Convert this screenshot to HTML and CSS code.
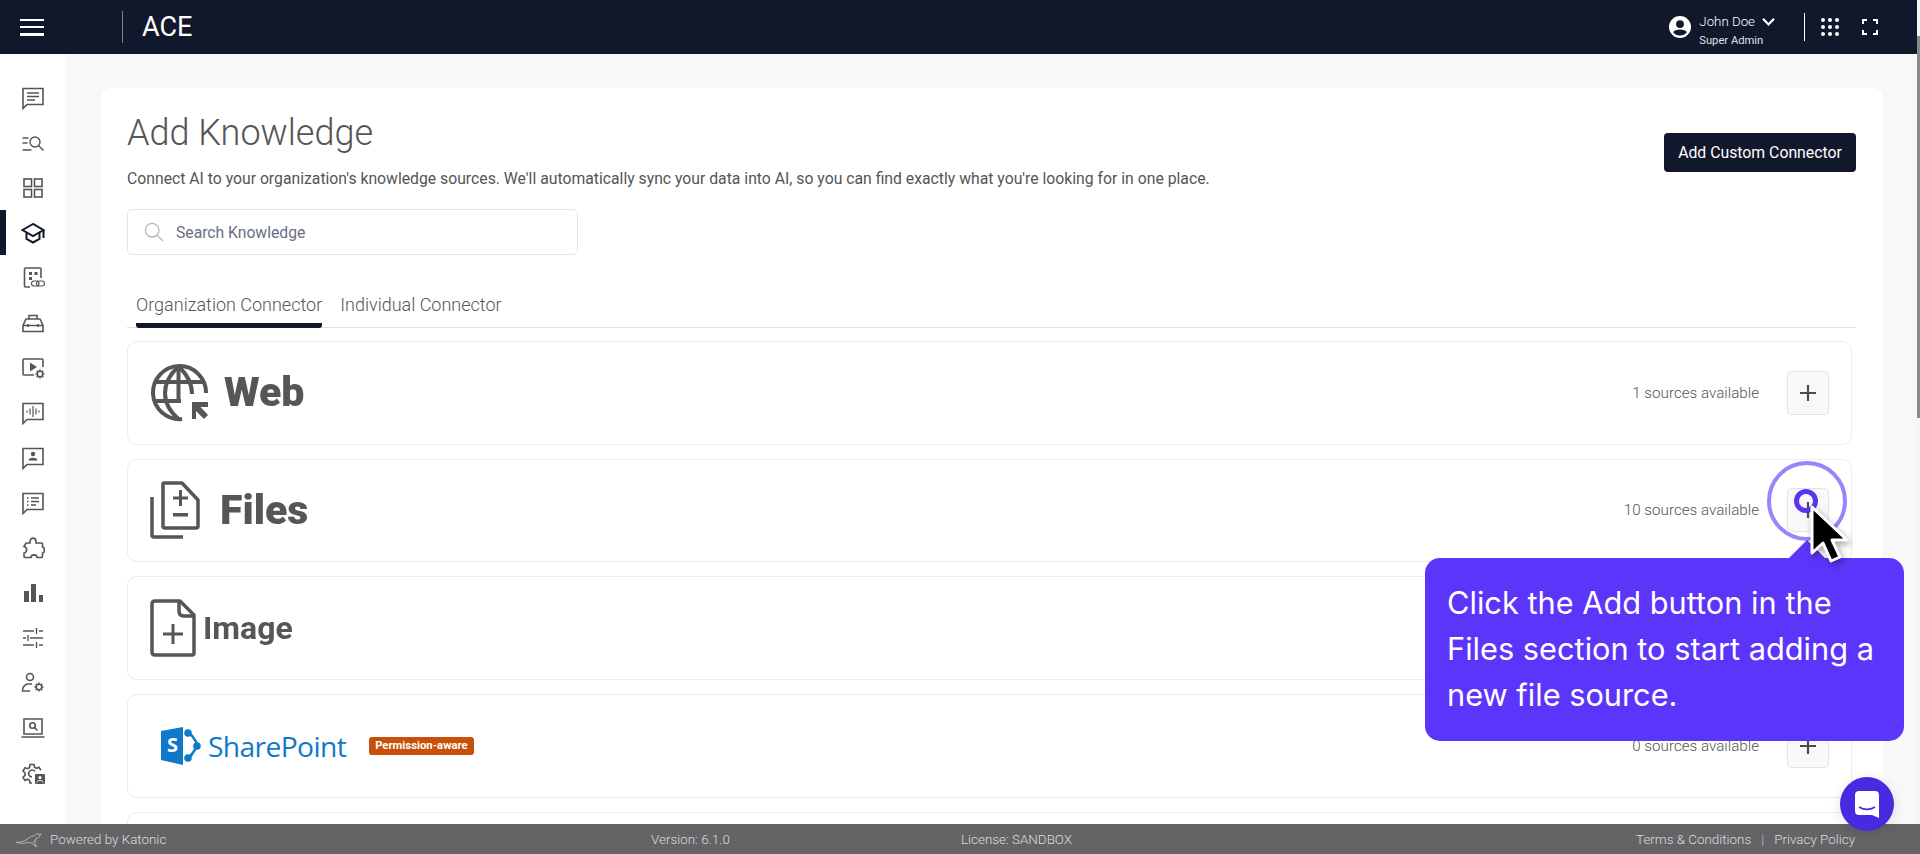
FILE: index.html
```html
<!DOCTYPE html>
<html lang="en">
<head>
<meta charset="utf-8">
<title>Add Knowledge</title>
<link rel="stylesheet" href="styles.css">
</head>
<body>
<header class="topbar">
  <button class="burger" aria-label="Menu"><span></span><span></span><span></span></button>
  <div class="brand">ACE</div>
  <div class="user">
    <svg class="avatar" viewBox="0 0 24 24"><path fill="#fff" d="M12 1a11 11 0 1 0 0 22 11 11 0 0 0 0-22Zm0 4.200a3.900 3.900 0 1 1 0 7.800 3.900 3.900 0 0 1 0-7.800Zm0 15.400c-2.900 0-5.400-1.400-7-3.600 1.500-1.700 4.300-2.500 7-2.500s5.500.8 7 2.500c-1.600 2.200-4.100 3.600-7 3.600Z"/></svg>
    <div class="user-text">
      <div class="user-name">John Doe <svg class="chev" viewBox="0 0 14 10"><path d="M1.500 1.800 7 7.500l5.500-5.700" fill="none" stroke="#fff" stroke-width="2.200"/></svg></div>
      <div class="user-role">Super Admin</div>
    </div>
  </div>
  <div class="top-tools">
    <svg class="apps" viewBox="0 0 18 18" fill="#fff"><circle cx="2" cy="2" r="2"/><circle cx="9" cy="2" r="2"/><circle cx="16" cy="2" r="2"/><circle cx="2" cy="9" r="2"/><circle cx="9" cy="9" r="2"/><circle cx="16" cy="9" r="2"/><circle cx="2" cy="16" r="2"/><circle cx="9" cy="16" r="2"/><circle cx="16" cy="16" r="2"/></svg>
    <svg class="full" viewBox="0 0 16 16"><path d="M1 5V1h4M11 1h4v4M15 11v4h-4M5 15H1v-4" fill="none" stroke="#fff" stroke-width="2"/></svg>
  </div>
</header>

<div class="body">
  <nav class="side">
    <a class="nav-item"><svg viewBox="0 0 24 24" class="ico"><path d="M2 2.500h20v16H6L2 22.500Z"/><path d="M6 7h12M6 10.500h12M6 14h8"/></svg></a>
    <a class="nav-item"><svg viewBox="0 0 24 24" class="ico thin"><path d="M1.500 7h6M1.500 12h5M1.500 19h9"/><circle cx="14" cy="11" r="5"/><path d="m17.500 14.500 5 5"/></svg></a>
    <a class="nav-item"><svg viewBox="0 0 24 24" class="ico"><rect x="3" y="3" width="7.500" height="7.500"/><rect x="13.500" y="3" width="7.500" height="7.500"/><rect x="3" y="13.500" width="7.500" height="7.500"/><rect x="13.500" y="13.500" width="7.500" height="7.500"/></svg></a>
    <a class="nav-item active"><svg viewBox="0 0 24 24" class="ico strong"><path d="M12 3 1.500 9 12 15l10.500-6Z"/><path d="M5.500 12v6l6.500 3.500 6.500-3.500v-6M22.500 9v8"/></svg></a>
    <a class="nav-item"><svg viewBox="0 0 24 24" class="ico"><path d="M9 21H4.500q-1 0-1-1V3q0-1 1-1H19q1 0 1 1v9"/><rect class="solid noline" x="8" y="6" width="3" height="3"/><rect class="solid noline" x="13.500" y="6" width="3" height="3"/><rect class="solid noline" x="8" y="11" width="3" height="3"/><rect class="fine" x="10.500" y="15" width="7.500" height="5" rx="2.500"/><rect class="fine" x="15.500" y="15" width="8" height="5" rx="2.500"/></svg></a>
    <a class="nav-item"><svg viewBox="0 0 24 24" class="ico"><path d="M2 20.500v-6L5 8h14l3 6.500v6ZM2 14.500h20M8 8V4.500h8V8M7 13v3M17 13v3"/></svg></a>
    <a class="nav-item"><svg viewBox="0 0 24 24" class="ico"><path d="M13 19H3q-1 0-1-1V4q0-1 1-1h18q1 0 1 1v7"/><path class="solid noline" d="M9 6.500 16 11l-7 4.500Z"/><circle cx="19" cy="18" r="2.800"/><path d="M19 13.500v1.700M19 20.800v1.700M14.500 18h1.700M21.800 18h1.700M15.800 14.800 17 16M21 20l1.200 1.200M15.800 21.200 17 20M21 16l1.200-1.200"/></svg></a>
    <a class="nav-item"><svg viewBox="0 0 24 24" class="ico"><path d="M2 2.500h20v16H6L2 22.500Z"/><path class="fine" d="M12 5v11M9 7.500v6M15 7.500v6M6 9.500v2M18 9.500v2"/></svg></a>
    <a class="nav-item"><svg viewBox="0 0 24 24" class="ico"><path d="M2 2.500h20v16H6L2 22.500Z"/><circle class="solid noline" cx="12" cy="8" r="2.200"/><path class="solid noline" d="M7.500 14.500c0-2 2-2.800 4.500-2.800s4.500.8 4.500 2.800Z"/></svg></a>
    <a class="nav-item"><svg viewBox="0 0 24 24" class="ico"><path d="M2 2.500h20v16H6L2 22.500Z"/><path d="M6 7h1.500M10 7h8M6 10.500h1.500M10 10.500h8M6 14h1.500M10 14h5"/></svg></a>
    <a class="nav-item"><svg viewBox="0 0 24 24" class="ico"><path d="M9 5.500c0-4.500 6-4.500 6 0V7h5.500q1 0 1 1v3c2.500 0 2.500 6 0 6v3.500q0 1-1 1H16c0-3.500-6-3.500-6 0H4q-1 0-1-1V17c3.500-.5 3.500-6 0-6.500L4.500 8q.5-1 1.500-1h3Z"/></svg></a>
    <a class="nav-item"><svg viewBox="0 0 24 24" class="ico"><path class="solid noline" d="M3 10h5v11H3ZM10 3h5v18h-5ZM18 14h4v7h-4Z"/></svg></a>
    <a class="nav-item"><svg viewBox="0 0 24 24" class="ico thin"><path d="M2 5h11M18 5h4M15.500 2v6M2 12h3M9 12h13M7 9v6M2 19h11M18 19h4M15.500 16v6"/></svg></a>
    <a class="nav-item"><svg viewBox="0 0 24 24" class="ico"><circle cx="9" cy="6" r="3.500"/><path d="M11 13H7c-3 0-5.500 3-5.500 7H9"/><circle cx="18" cy="16" r="2.800"/><path d="M18 11.500v1.700M18 18.800v1.700M13.500 16h1.700M20.800 16h1.700M14.800 12.800 16 14M20 18l1.200 1.200M14.800 19.200 16 18M20 14l1.200-1.200"/></svg></a>
    <a class="nav-item"><svg viewBox="0 0 24 24" class="ico"><path d="M3 3h18v15H3ZM.5 21h23"/><circle cx="11.500" cy="9.500" r="2.800"/><path d="m13.500 11.500 3 3"/></svg></a>
    <a class="nav-item"><svg viewBox="0 0 24 24" class="ico"><path d="M11 22h-2l-.5-2.800-2-1-2.500 1.200-2-3 2-2V12L2 10l2-3.300 2.500 1 2-1L9 3.500h4l.5 2.800 2 1 2.500-1 2 3"/><path d="M14 10.500a3.500 3.500 0 1 0-3 5.500"/><rect class="solid noline" x="14" y="13" width="10" height="10" rx="1"/><circle cx="19" cy="16.500" r="1.500" fill="#fff" stroke="none"/><path d="M16 21.500c0-3 6-3 6 0" stroke="#fff" stroke-width="1"/></svg></a>
  </nav>

  <main class="main">
    <section class="card">
      <div class="card-head">
        <div>
          <h1 class="title">Add Knowledge</h1>
          <p class="subtitle">Connect AI to your organization's knowledge sources. We'll automatically sync your data into AI, so you can find exactly what you're looking for in one place.</p>
        </div>
        <button class="primary">Add Custom Connector</button>
      </div>
      <label class="search">
        <svg viewBox="0 0 22 22"><circle cx="9" cy="9" r="7.500"/><path d="m14.500 14.500 6.500 6.500"/></svg>
        <span>Search Knowledge</span>
      </label>
      <div class="tabs">
        <div class="tab on">Organization Connector</div>
        <div class="tab">Individual Connector</div>
      </div>
      <div class="rows">
        <article class="row">
          <div class="logo logo-web">
            <svg class="glyph" viewBox="0 0 58 58"><g fill="none" stroke="#565656" stroke-width="4"><path d="M32 55a26.500 26.500 0 1 1 24-26"/><path d="M28.500 2.500C18 12 15 21 15 29s3 17 13.500 26M28.500 2.500C39 12 42 21 42 30"/><path d="M5 18h48M3 37h28"/><path d="M28.500 2.500V38"/></g><path d="M42 38h16v5h-7.500L58 51l-4 4-8-8v8h-4Z" fill="#565656"/></svg>
            <span class="word w-web">Web</span>
          </div>
          <div class="meta"><span class="count">1 sources available</span><button class="add"><svg viewBox="0 0 16 16"><path d="M8 0v16M0 8h16"/></svg></button></div>
        </article>
        <article class="row">
          <div class="logo logo-files">
            <svg class="glyph-files" viewBox="0 0 50 58"><g fill="none" stroke="#565656" stroke-width="3.500"><path d="M2 16v38q0 2 2 2h29"/><path d="M14 2h18l16 17v26q0 2-2 2H15q-2 0-2-2V3q0-1 1-1Z" stroke-linejoin="round"/></g><path d="M29 9h3v6.500h6v3h-6V25h-3v-6.500h-6v-3h6ZM23 32h15v3.500H23Z" fill="#565656"/></svg>
            <span class="word w-files">Files</span>
          </div>
          <div class="meta"><span class="count">10 sources available</span><button class="add"><svg viewBox="0 0 16 16"><path d="M8 0v16M0 8h16"/></svg></button></div>
        </article>
        <article class="row">
          <div class="logo logo-image">
            <svg class="glyph-image" viewBox="0 0 46 58"><path d="M5 2h25l14 14v38q0 2-2 2H5q-3 0-3-3V5q0-3 3-3Z" fill="none" stroke="#565656" stroke-width="3.500" stroke-linejoin="round"/><path d="M29 3v9q0 5 5 5h10" fill="none" stroke="#565656" stroke-width="3.500"/><path d="M21.500 25h3v8.500H33v3h-8.500V45h-3v-8.500H13v-3h8.500Z" fill="#565656"/></svg>
            <span class="word w-image">Image</span>
          </div>
          <div class="meta"><button class="add"><svg viewBox="0 0 16 16"><path d="M8 0v16M0 8h16"/></svg></button></div>
        </article>
        <article class="row">
          <div class="logo logo-sp">
            <svg class="sp-mark" viewBox="0 0 40 38"><path d="M0 4 22 0v38L0 33Z" fill="#0f78c8"/><g fill="none" stroke="#0f78c8" stroke-width="2.400"><path d="M26 6c4 0 6 4 11 12-5 8-7 12-11 13"/></g><circle cx="27" cy="6" r="3.800" fill="#0f78c8"/><circle cx="36" cy="19" r="3.800" fill="#0f78c8"/><circle cx="27" cy="31" r="3.800" fill="#0f78c8"/><text x="6" y="24.500" class="sp-s">S</text></svg>
            <span class="sp-word">SharePoint</span>
            <span class="badge">Permission-aware</span>
          </div>
          <div class="meta"><span class="count">0 sources available</span><button class="add"><svg viewBox="0 0 16 16"><path d="M8 0v16M0 8h16"/></svg></button></div>
        </article>
        <article class="row"></article>
      </div>
    </section>
  </main>
</div>

<footer class="foot">
  <div class="foot-left">
    <svg class="roo" viewBox="0 0 30 18"><path d="M0 12c5 0 9-1 13-4 2-2 5-3 7-3l3-3 1 2 3-1-3 4-3 1 0 3-2 0 3 6-5-4c-3-1-5-1-8 0-3 0-6 0-9-1Z" fill="none" stroke="#b9b9bb" stroke-width="1"/></svg>
    <span>Powered by Katonic</span>
  </div>
  <span class="foot-version">Version: 6.1.0</span>
  <span class="foot-license">License: SANDBOX</span>
  <div class="foot-links"><span>Terms &amp; Conditions</span><i>|</i><span>Privacy Policy</span></div>
</footer>

<div class="scrollbar"><div class="thumb"></div></div>
<div class="ring"></div>
<div class="dot"></div>
<div class="tip-arrow"></div>
<div class="tip">Click the Add button in the Files section to start adding a new file source.</div>
<svg class="cursor" viewBox="0 0 40 58"><path d="M2 2v46l11-10 8 18 9-4-8-17h15Z" fill="#000" stroke="#fff" stroke-width="3" stroke-linejoin="round"/></svg>
<div class="chat"><svg viewBox="0 0 24 27"><path d="M4 0h16q4 0 4 4v23l-7-3H4q-4 0-4-4V4q0-4 4-4Z" fill="#fff"/><path d="M4 16c5 3 11 3 16 0" fill="none" stroke="#4a2ae0" stroke-width="1.700"/></svg></div>
</body>
</html>
```

FILE: styles.css
```css
* { box-sizing: border-box; }
html, body { margin: 0; height: 100%; overflow: hidden; }
body {
  width: 1920px; height: 854px; display: flex; flex-direction: column;
  font-family: Roboto, "Liberation Sans", sans-serif; color: #555; background: #f8f8f8;
}
button { font: inherit; border: 0; padding: 0; cursor: pointer; }

.topbar {
  height: 54px; flex: none; display: flex; align-items: center; background: #12182b;
  color: #fff; padding-left: 20px; padding-right: 42px;
}
.burger { width: 24px; height: 17px; background: none; display: flex; flex-direction: column; justify-content: space-between; }
.burger span { display: block; height: 2.500px; background: #fff; }
.brand {
  margin-left: 78px; padding-left: 19px; border-left: 1px solid #7d808a;
  height: 32px; line-height: 32px; font-size: 27px; color: #fff;
}
.user { margin-left: auto; display: flex; align-items: center; gap: 7px; }
.avatar { width: 24px; height: 24px; }
.user-text { font-weight: 300; line-height: 1; padding-top: 5px; }
.user-name { font-size: 13.300px; display: flex; align-items: center; gap: 6px; height: 18px; }
.chev { width: 15px; height: 10px; }
.user-role { font-size: 11.200px; margin-top: 4px; font-weight: 400; color: #dfe0e4; }
.top-tools { margin-left: 28px; padding-left: 16px; height: 28px; border-left: 1px solid #fff; display: flex; align-items: center; gap: 23px; }
.apps { width: 18px; height: 18px; }
.full { width: 16px; height: 16px; }

.body { flex: 1; min-height: 0; display: flex; }
.side { width: 66px; flex: none; background: #fff; padding-top: 21px; display: flex; flex-direction: column; }
.nav-item { height: 45px; flex: none; display: flex; align-items: center; padding-left: 21px; }
.nav-item.active { box-shadow: inset 6px 0 0 #12182b; }
.ico { width: 24px; height: 24px; fill: none; stroke: #555; stroke-width: 1.600; }
.ico.thin { stroke-width: 1.400; }
.ico.strong { stroke: #12182b; stroke-width: 2; }
.ico .solid { fill: #555; }
.ico .noline { stroke: none; }
.ico .fine { stroke-width: 1.200; }

.main { flex: 1; min-width: 0; padding: 34px 37px 0 35px; overflow: hidden; }
.card { background: #fff; border-radius: 10px 10px 0 0; padding: 0 27px 0 26px; height: 760px; overflow: hidden; }
.card-head { display: flex; justify-content: space-between; align-items: flex-start; padding-top: 24px; }
.title { margin: 0; font-size: 36px; font-weight: 300; line-height: 42px; color: #555; }
.subtitle { margin: 15px 0 0; font-size: 15.750px; line-height: 20px; color: #555; }
.primary { margin: 21px 0 0 0; width: 192px; height: 39px; border-radius: 4px; background: #12182b; color: #fff; font-size: 15.800px; font-weight: 400; }
.search { margin-top: 20px; width: 451px; height: 46px; border: 1px solid #e6e6e6; border-radius: 5px; display: flex; align-items: center; padding-left: 16px; gap: 12px; font-size: 15.700px; color: #667085; }
.search svg { width: 20px; height: 20px; fill: none; stroke: #b9b9b9; stroke-width: 1.500; }
.tabs { margin-top: 31px; display: flex; gap: 18px; padding-left: 9px; border-bottom: 1px solid #e0e0e6; height: 42px; }
.tab { font-size: 18px; font-weight: 300; line-height: 38px; height: 42px; color: #555; }
.tab.on { border-bottom: 5px solid #12182b; border-radius: 3px; }
.rows { margin-top: 13px; width: 1725px; display: flex; flex-direction: column; gap: 14.200px; }
.row { height: 103.500px; flex: none; border: 1px solid #ececec; border-radius: 10px; display: flex; align-items: center; justify-content: space-between; padding: 0 22px; }
.logo { display: flex; align-items: center; }
.glyph { width: 58px; height: 58px; }
.glyph-files { width: 50px; height: 58px; }
.glyph-image { width: 46px; height: 58px; }
.word { font-weight: 700; color: #565656; filter: blur(.5px); line-height: 1; }
.w-web { font-size: 41px; margin-left: 16px; font-weight: 900; }
.w-files { font-size: 41px; margin-left: 20px; font-weight: 900; }
.w-image { font-size: 32px; margin-left: 7px; }
.logo-sp { padding-left: 11px; }
.sp-mark { width: 40px; height: 38px; }
.sp-s { font: 700 20px "Open Sans", sans-serif; fill: #fff; }
.sp-word { margin-left: 7px; font: 400 28.200px/1 "Open Sans", sans-serif; letter-spacing: -.6px; color: #0f78c8; }
.badge { margin-left: 23px; background: #c8500a; color: #fff; border-radius: 3px; font-size: 11.300px; font-weight: 700; line-height: 18px; padding: 0 6px; white-space: nowrap; }
.meta { display: flex; align-items: center; gap: 28px; }
.count { font-size: 15.200px; font-weight: 300; color: #555; }
.add { width: 42px; height: 44px; background: #f8f8f8; border: 1px solid #e4e4e4; border-radius: 4px; display: flex; align-items: center; justify-content: center; }
.add svg { width: 16px; height: 16px; fill: none; stroke: #4c4c4c; stroke-width: 2.200; }

.foot { height: 30px; flex: none; background: #646466; color: #dcdcde; font-size: 13.400px; font-weight: 300; display: flex; align-items: center; padding: 0 65px 0 16px; position: relative; z-index: 1; }
.foot-left { display: flex; align-items: center; gap: 6px; width: 635px; }
.roo { width: 28px; height: 17px; }
.foot-version { width: 310px; }
.foot-links { margin-left: auto; display: flex; gap: 10px; }
.foot-links i { font-style: normal; color: #c4b6e0; }

.scrollbar { position: absolute; right: 0; top: 0; width: 3px; height: 824px; background: #f6f6f6; z-index: 2; padding-top: 36px; }
.thumb { height: 382px; background: #8a8a8a; }
.ring { position: absolute; left: 1767px; top: 461px; width: 80px; height: 80px; border: 4px solid #9b83fb; border-radius: 50%; z-index: 3; }
.dot { position: absolute; left: 1794px; top: 489px; width: 24px; height: 24px; border: 5px solid #5a35f0; border-radius: 50%; z-index: 3; }
.tip { position: absolute; left: 1425px; top: 558px; width: 479px; height: 183px; padding: 22px 20px 0 22px; background: #5b35f9; border-radius: 15px; color: #fff; font: 400 30.750px/46px Inter, sans-serif; z-index: 4; }
.tip-arrow { position: absolute; left: 1788px; top: 540px; width: 38px; height: 19px; background: #5b35f9; clip-path: polygon(0 100%, 50% 0, 100% 100%); z-index: 3; }
.cursor { position: absolute; left: 1810px; top: 505px; width: 40px; height: 58px; z-index: 5; filter: drop-shadow(2px 3px 3px rgba(0,0,0,.35)); }
.chat { position: absolute; left: 1840px; top: 777px; width: 54px; height: 54px; border-radius: 50%; background: #4a2ae0; display: flex; align-items: center; justify-content: center; z-index: 5; box-shadow: 0 2px 12px rgba(0,0,0,.12); }
.chat svg { width: 24px; height: 27px; }
```
